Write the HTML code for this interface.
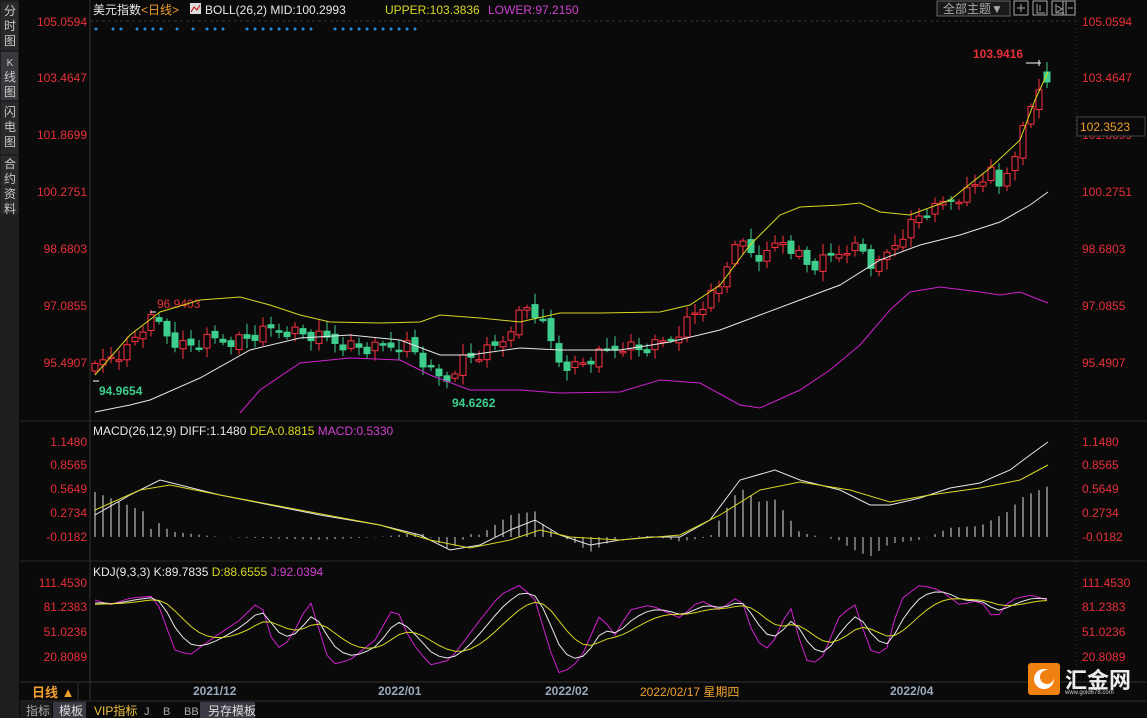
<!DOCTYPE html><html><head><meta charset="utf-8"><style>
body{margin:0;background:#0a0a0a;width:1147px;height:718px;overflow:hidden;font-family:"Liberation Sans","Noto Sans CJK SC",sans-serif;}
svg{position:absolute;left:0;top:0}
</style></head><body>
<svg id="s" width="1147" height="718" xmlns="http://www.w3.org/2000/svg" font-family="Liberation Sans, Noto Sans CJK SC, sans-serif">
<rect width="1147" height="718" fill="#0a0a0a"/>
<rect x="0" y="0" width="19" height="718" fill="#1e1e20"/>
<rect x="1" y="2" width="17" height="48" fill="#2a2a2c"/>
<rect x="1" y="52" width="17" height="48" fill="#3a3a3e"/>
<rect x="1" y="102" width="17" height="52" fill="#2a2a2c"/>
<rect x="1" y="156" width="17" height="58" fill="#2a2a2c"/>
<g fill="#c8c8c8" font-size="12" text-anchor="middle">
<text x="10" y="15">分</text><text x="10" y="30">时</text><text x="10" y="45">图</text>
<text x="10" y="66" font-size="10">K</text><text x="10" y="81">线</text><text x="10" y="96">图</text>
<text x="10" y="116">闪</text><text x="10" y="131">电</text><text x="10" y="146">图</text>
<text x="10" y="168">合</text><text x="10" y="183">约</text><text x="10" y="198">资</text><text x="10" y="213">料</text>
</g>
<line x1="90" y1="0" x2="90" y2="700" stroke="#333" />
<line x1="1076" y1="0" x2="1076" y2="680" stroke="#333" stroke-dasharray="1,3"/>
<line x1="90" y1="21" x2="1076" y2="21" stroke="#333" stroke-dasharray="3,3"/>
<line x1="20" y1="421" x2="1147" y2="421" stroke="#2a2a2a"/>
<line x1="20" y1="561" x2="1147" y2="561" stroke="#2a2a2a"/>
<line x1="20" y1="682" x2="1147" y2="682" stroke="#333"/>
<line x1="20" y1="701" x2="1147" y2="701" stroke="#333"/>
<g font-size="12" fill="#e8e8e8">
<text x="93" y="14">美元指数<tspan fill="#f0a030">&lt;日线&gt;</tspan></text>
<rect x="190" y="3" width="11" height="11" fill="#ddd"/><polyline points="191,12 194,7 197,10 200,5" stroke="#c00" fill="none"/>
<text x="205" y="14">BOLL(26,2) MID:100.2993</text>
<text x="385" y="14" fill="#d8d820">UPPER:103.3836</text>
<text x="488" y="14" fill="#d040d0">LOWER:97.2150</text>
<text x="93" y="435">MACD(26,12,9) DIFF:1.1480 <tspan fill="#d8d820">DEA:0.8815</tspan> <tspan fill="#d040d0">MACD:0.5330</tspan></text>
<text x="93" y="576">KDJ(9,3,3) K:89.7835 <tspan fill="#d8d820">D:88.6555</tspan> <tspan fill="#d040d0">J:92.0394</tspan></text>
</g>
<rect x="937" y="1" width="73" height="15" fill="#1a1a1a" stroke="#666"/>
<text x="943" y="13" font-size="12" fill="#aaa">全部主题▼</text>
<g fill="none" stroke="#aaa"><rect x="1014" y="1" width="14" height="14"/><rect x="1033" y="1" width="14" height="14"/><rect x="1052" y="1" width="14" height="14"/><rect x="1063" y="1" width="12" height="14"/>
<path d="M1021 4v8M1017 8h8M1037 4v9h8M1040 5v6M1056 4v9h8M1057 6l5 3-5 3M1066 4v9M1068 8h5"/></g>
<g font-size="12" fill="#e8303a">
<text x="87" y="26" text-anchor="end">105.0594</text><text x="87" y="82" text-anchor="end">103.4647</text><text x="87" y="139" text-anchor="end">101.8699</text><text x="87" y="196" text-anchor="end">100.2751</text><text x="87" y="253" text-anchor="end">98.6803</text><text x="87" y="310" text-anchor="end">97.0855</text><text x="87" y="367" text-anchor="end">95.4907</text>
<text x="1082" y="26">105.0594</text><text x="1082" y="82">103.4647</text><text x="1082" y="139">101.8699</text><text x="1082" y="196">100.2751</text><text x="1082" y="253">98.6803</text><text x="1082" y="310">97.0855</text><text x="1082" y="367">95.4907</text>
<text x="87" y="446" text-anchor="end">1.1480</text><text x="87" y="469" text-anchor="end">0.8565</text><text x="87" y="493" text-anchor="end">0.5649</text><text x="87" y="517" text-anchor="end">0.2734</text><text x="87" y="541" text-anchor="end">-0.0182</text>
<text x="1082" y="446">1.1480</text><text x="1082" y="469">0.8565</text><text x="1082" y="493">0.5649</text><text x="1082" y="517">0.2734</text><text x="1082" y="541">-0.0182</text>
<text x="87" y="587" text-anchor="end">111.4530</text><text x="87" y="611" text-anchor="end">81.2383</text><text x="87" y="636" text-anchor="end">51.0236</text><text x="87" y="661" text-anchor="end">20.8089</text>
<text x="1082" y="587">111.4530</text><text x="1082" y="611">81.2383</text><text x="1082" y="636">51.0236</text><text x="1082" y="661">20.8089</text>
<text x="973" y="58" font-weight="bold">103.9416</text>
<text x="157" y="308">96.9403</text>
</g>
<rect x="1077" y="117" width="68" height="19" fill="#0a0a0a" stroke="#444"/>
<text x="1080" y="131" font-size="12" fill="#f0a030">102.3523</text>
<text x="99" y="395" font-size="12" fill="#3ecf8e" font-weight="bold">94.9654</text>
<text x="452" y="407" font-size="12" fill="#3ecf8e" font-weight="bold">94.6262</text>
<g id="dots" fill="#2a8ad8"></g>
<g id="main"></g>
<g id="macd"></g>
<g id="kdj"></g>
<g font-size="12" fill="#9ab" font-weight="bold">
<text x="193" y="695">2021/12</text><text x="378" y="695">2022/01</text><text x="545" y="695">2022/02</text><text x="890" y="695">2022/04</text>
</g>
<rect x="637" y="683" width="124" height="17" fill="#0a0a0a"/>
<text x="640" y="696" font-size="12" fill="#f0a030">2022/02/17 星期四</text>
<text x="32" y="697" font-size="13" fill="#f0a030" font-weight="bold">日线 ▲</text>
<line x1="78" y1="682" x2="78" y2="701" stroke="#333"/>
<rect x="20" y="702" width="32" height="16" fill="#1a1a1a"/><text x="26" y="715" font-size="12" fill="#aaa">指标</text>
<rect x="53" y="702" width="33" height="16" fill="#3a3a44"/><text x="59" y="715" font-size="12" fill="#ddd">模板</text>
<text x="94" y="715" font-size="12" fill="#f0c040">VIP指标</text>
<text x="144" y="715" font-size="11" fill="#aaa">J</text><text x="163" y="715" font-size="11" fill="#aaa">B</text><text x="184" y="715" font-size="11" fill="#aaa">BB</text>
<rect x="200" y="702" width="55" height="16" fill="#3a3a44"/><text x="208" y="715" font-size="12" fill="#ddd">另存模板</text>
<rect x="1028" y="663" width="32" height="32" rx="3" fill="#f08010"/>
<circle cx="1044" cy="679" r="10" fill="#fff"/><circle cx="1047" cy="677" r="7" fill="#f08010"/>
<text x="1065" y="688" font-size="22" fill="#eee" font-weight="bold">汇金网</text>
<text x="1065" y="694" font-size="6" fill="#ccc">www.gold678.com</text>
</svg>
<script>
const NS="http://www.w3.org/2000/svg";
function el(p,t,a){const e=document.createElementNS(NS,t);for(const k in a)e.setAttribute(k,a[k]);document.getElementById(p).appendChild(e);return e;}
function interp(pts,x){for(let i=0;i<pts.length-1;i++){if(x>=pts[i][0]&&x<=pts[i+1][0]){const t=(x-pts[i][0])/(pts[i+1][0]-pts[i][0]);return pts[i][1]+t*(pts[i+1][1]-pts[i][1]);}}return x<pts[0][0]?pts[0][1]:pts[pts.length-1][1];}
function pl(p,pts,c){el(p,'polyline',{points:pts.map(q=>q.join(',')).join(' '),fill:'none',stroke:c,'stroke-width':1});}
// dots
[[96],[113,121],[137,145,153,161],[177],[193],[207,215,223],[247,255,263,271,279,287,295,303,311],[335,343,351,359,367,375,383,391,399,407,415]].flat().forEach(x=>el('dots','circle',{cx:x,cy:29,r:1.5}));
const C=[[95,370],[110,355],[125,352],[140,330],[155,318],[165,332],[180,345],[195,345],[210,340],[230,340],[250,338],[270,330],[290,330],[310,336],[330,340],[350,345],[370,350],[390,345],[410,345],[430,372],[445,382],[460,360],[480,355],[500,345],[515,318],[530,305],[545,330],[560,362],[575,366],[590,360],[610,350],[625,344],[640,350],[660,345],[675,335],[690,318],[705,303],[720,288],[735,238],[750,252],[765,260],[780,238],[795,250],[810,268],[830,258],[850,245],[865,252],[875,272],[890,250],[905,230],[920,215],[935,210],[950,198],[965,194],[980,180],[990,172],[1000,190],[1015,150],[1025,125],[1037,88],[1047,75]];
let prev=interp(C,93)+4;
for(let i=0;i<120;i++){const x=95+i*8;if(x>1048)break;
 let c=interp(C,x)+((i*37)%7-3)*2.2;let o=prev+((i*53)%5-2)*1.5;
 if(x>1043){o=72;c=82;}
 const up=c<o;const top=Math.min(o,c),bot=Math.max(o,c);const h=Math.max(bot-top,1.5);
 const hi=top-3-((i*17)%9),lo=bot+3+((i*29)%8);
 const col=up?'#ff3040':'#3ecf8e';
 el('main','line',{x1:x,y1:hi,x2:x,y2:lo,stroke:col});
 el('main','rect',{x:x-3,y:top,width:6,height:h,fill:up?'#0a0a0a':col,stroke:col});
 prev=c;}
pl('main',[[95,375],[130,335],[160,312],[200,300],[240,297],[270,305],[300,315],[330,322],[380,323],[420,322],[440,315],[480,318],[520,322],[560,313],[600,313],[660,312],[690,305],[720,285],[750,245],[780,215],[800,207],[840,205],[860,203],[880,212],[910,215],[950,200],[990,168],[1020,140],[1035,100],[1048,72]],'#d8d820');
pl('main',[[95,412],[130,405],[150,400],[200,378],[250,350],[300,338],[350,335],[400,340],[440,355],[470,355],[520,348],[560,350],[620,350],[670,342],[720,330],[760,315],[800,300],[840,285],[880,260],[920,245],[960,235],[1000,222],[1030,205],[1048,192]],'#e8e8e8');
pl('main',[[240,413],[260,390],[300,363],[350,358],[400,360],[430,375],[470,390],[520,390],[560,393],[620,392],[660,380],[700,383],[740,405],[760,408],[800,390],[830,370],[860,345],[890,310],[910,292],[940,287],[980,292],[1000,295],[1020,292],[1048,303]],'#d020d0');
el('main','line',{x1:1026,y1:63,x2:1041,y2:63,stroke:'#fff'});el('main','line',{x1:1039,y1:60,x2:1039,y2:66,stroke:'#fff'});
el('main','line',{x1:93,y1:381,x2:99,y2:381,stroke:'#fff'});el('main','line',{x1:150,y1:312,x2:156,y2:312,stroke:'#fff'});
// MACD
const DIF=[[95,515],[130,495],[160,480],[180,485],[220,495],[270,505],[320,515],[380,525],[420,535],[450,550],[480,545],[510,530],[535,520],[560,535],[590,545],[620,540],[650,537],[680,537],[710,520],[740,480],[775,470],[800,480],[840,490],[870,505],[890,505],[920,498],[950,488],[980,483],[1010,470],[1030,455],[1048,442]];
const DEA=[[95,510],[140,490],[170,485],[220,495],[300,510],[380,525],[430,540],[470,548],[510,540],[540,530],[570,537],[620,540],[680,535],[720,515],[760,490],[800,482],[850,490],[890,502],[930,495],[980,488],[1020,480],[1048,465]];
for(let x=95;x<=1048;x+=8){const h=(interp(DEA,x)-interp(DIF,x))*2.2;let y2=537-h;if(x<150)y2=537-(45-(x-95)*0.4);
 el('macd','line',{x1:x,y1:537,x2:x,y2:y2,stroke:y2<537?'#ddd':'#ccc'});}
pl('macd',DIF,'#e8e8e8');pl('macd',DEA,'#d8d820');
// KDJ
const J=[[95,600],[110,605],[130,598],[155,596],[175,650],[190,655],[210,640],[240,620],[260,600],[275,650],[290,640],[310,600],[330,665],[350,660],[375,640],[395,605],[410,640],[430,665],[450,660],[480,620],[500,595],[520,585],[535,600],[550,650],[560,675],[580,660],[600,615],[615,635],[630,610],[650,605],[680,618],[700,600],[720,610],[740,595],[755,640],[770,650],[790,605],[805,660],[820,663],[840,615],[855,605],[870,650],[885,655],[900,600],[920,585],[940,590],[960,605],[980,600],[995,620],[1010,600],[1030,595],[1048,600]];
let k=605,d=605;const Kp=[],Dp=[],Jp=[];
for(let x=95;x<=1048;x+=8){const j=interp(J,x);k=k+(j-k)*0.4;d=d+(k-d)*0.3;Jp.push([x,j]);Kp.push([x,k]);Dp.push([x,d]);}
pl('kdj',Jp,'#d020d0');pl('kdj',Kp,'#e8e8e8');pl('kdj',Dp,'#d8d820');
</script>
</body></html>
